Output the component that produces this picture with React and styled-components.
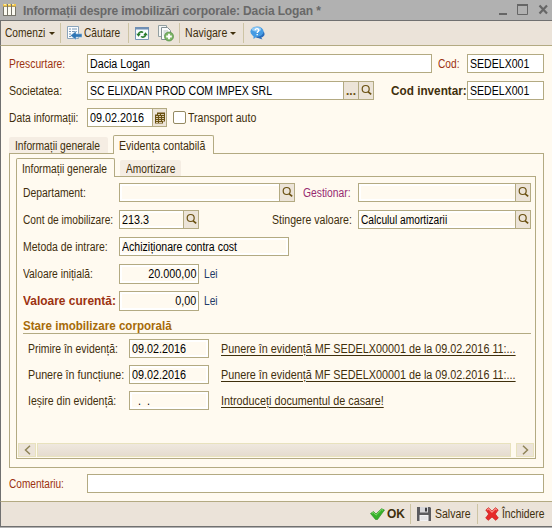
import React, { useState } from "react";
import styled, { createGlobalStyle } from "styled-components";

const line = "#b3aa82";

const GlobalStyle = createGlobalStyle`
  * {
    box-sizing: border-box;
  }

  body {
    margin: 0;
    font-family: "Liberation Sans", Arial, sans-serif;
    font-size: 12px;
    color: #3f2f0c;
  }

  input, button {
    font: inherit;
    color: inherit;
  }
`;

function SearchIcon() {
  return (
    <svg width="13" height="13" viewBox="0 0 13 13" fill="none" stroke="#6b5112">
      <circle cx="5.7" cy="5" r="3.5" strokeWidth="1.2" />
      <path d="M8.2 7.8L11.2 10.3" strokeWidth="1.7" />
    </svg>
  );
}

function CalendarIcon() {
  return (
    <svg width="12" height="12" viewBox="0 0 12 12">
      <path d="M3 0.500H11V9.500H9V11.500H1V2.500H3Z" fill="#6b5112" />
      <path d="M2 4.500H4M5 4.500H7M8 4.500H10M2 6.500H4M5 6.500H7M8 6.500H10M2 8.500H4M5 8.500H7M8 8.500H10M4 2.500H6M7 2.500H10M2 10.500H4M5 10.500H8" stroke="#e4d9c0" strokeWidth="0.9" />
    </svg>
  );
}

function JournalIcon() {
  return (
    <svg width="13" height="12" viewBox="0 0 13 12">
      <path d="M0 0H13V12H0Z" fill="#77756b" />
      <path d="M1 3H4V11H1ZM5 3H8V11H5ZM9 3H12V11H9Z" fill="#fbfaf2" />
      <path d="M0 0H4V2.500H0ZM5 0H8V2.500H5ZM9 0H13V2.500H9Z" fill="#efc44e" />
      <path d="M1 0H3V1H1ZM5 0H7V1H5ZM9 0H11V1H9Z" fill="#fff0a0" />
    </svg>
  );
}

function FindIcon() {
  return (
    <svg width="17" height="16" viewBox="0 0 17 16">
      <path d="M1.500 1.500H12.500V13.500H1.500Z" fill="#fbfdff" stroke="#8ba4bb" />
      <path d="M3 4H5M6 4H11M3 6.500H5M6 6.500H11M3 9H5M3 11.500H5" stroke="#7796b4" />
      <path d="M16 8.800V12.200H10V15L4.500 10.500L10 6V8.800Z" fill="#2f76b5" stroke="#d8e8f5" strokeWidth="0.5" />
    </svg>
  );
}

function RefreshIcon() {
  return (
    <svg width="14" height="13" viewBox="0 0 14 13">
      <path d="M0.500 0.500H13.500V12.500H0.500Z" fill="#f8fbff" stroke="#7895b4" />
      <path d="M0 0H14V2.500H0Z" fill="#6f8fb4" />
      <path d="M3.500 7C4 4.800 6.500 4.300 8 5.500M10.500 8C10 10.200 7.500 10.700 6 9.500" fill="none" stroke="#267a2b" strokeWidth="1.6" />
      <path d="M1.200 6.700H5.800L3.500 9.700ZM8.200 8.300H12.800L10.500 5.300Z" fill="#267a2b" />
    </svg>
  );
}

function CopyIcon() {
  return (
    <svg width="16" height="17" viewBox="0 0 16 17">
      <path d="M0.500 0.500H8.500V11.500H0.500Z" fill="#f4f6f5" stroke="#939fa1" />
      <path d="M3.500 2.500H9.500L12.500 5.500V14.500H3.500Z" fill="#fbfcfc" stroke="#839094" />
      <path d="M5.500 6H10M5.500 8H10M5.500 10H8" stroke="#b7c0c4" />
      <circle cx="11" cy="11.500" r="4.500" fill="#7db566" stroke="#4f8b42" strokeWidth="0.7" />
      <path d="M11 8.700V14.300M8.200 11.500H13.800" stroke="#fff" strokeWidth="1.800" />
    </svg>
  );
}

function HelpIcon() {
  return (
    <svg width="15" height="15" viewBox="0 0 15 15">
      <ellipse cx="9" cy="8" rx="5.600" ry="4" fill="#2a6cba" />
      <path d="M10 10L12.500 13.500L6.500 11.500Z" fill="#2a6cba" />
      <ellipse cx="7" cy="5.600" rx="6.600" ry="5.100" fill="#459be3" />
      <path d="M3.500 9L3.500 13L7.500 10Z" fill="#459be3" />
      <ellipse cx="6.500" cy="3.300" rx="4.600" ry="2.200" fill="#8dc8f5" />
      <path d="M5.200 4.300C5.200 2 9.200 2.200 8.700 4.500C8.500 5.500 7.200 5.700 7.200 7M7.200 8V9.300" fill="none" stroke="#fff" strokeWidth="1.400" />
    </svg>
  );
}

function CheckIcon() {
  return (
    <svg width="15" height="12" viewBox="0 0 15 12">
      <path d="M0.500 5.500L3.500 3.500L6 6L11.500 0.700L14.500 2L7.500 11.500H5.500Z" fill="#36b02a" stroke="#23891d" strokeWidth="0.6" />
      <path d="M1.800 5.400L3.400 4.400L6 7.200L11.600 1.700L13 2.200" fill="none" stroke="#8be375" strokeWidth="0.9" />
    </svg>
  );
}

function SaveIcon() {
  return (
    <svg width="14" height="14" viewBox="0 0 14 14">
      <path d="M0 0H13L14 1V14H0Z" fill="#5b5b5f" />
      <path d="M3 0H11V5.500H3Z" fill="#d6d6da" />
      <path d="M8 0.800H10V4.500H8Z" fill="#3c3c40" />
      <path d="M2.500 8H11.500V14H2.500Z" fill="#f2f2f4" />
      <path d="M3.500 10H10.500M3.500 12H10.500" stroke="#d4d4d8" />
    </svg>
  );
}

function CrossIcon() {
  return (
    <svg width="14" height="14" viewBox="0 0 14 14">
      <path d="M0.800 3L3.500 0.700L7 4L10.500 0.700L13.200 3L10.300 7L13.300 11L10.700 13.300L7 10L3.300 13.300L0.700 11L3.700 7Z" fill="#e62a2a" stroke="#c81a1a" strokeWidth="0.7" />
      <path d="M2 3L3.600 1.800L7 5.200L10.400 1.800L12 3" fill="none" stroke="#f98c84" strokeWidth="1.100" />
    </svg>
  );
}

function Caption({ width, indent, s, children, ...rest }) {
  return (
    <Label $w={width} $pl={indent} {...rest}>
      <Text $s={s}>{children}</Text>
    </Label>
  );
}

function InputField({ width, height, value, s, right, children, ...rest }) {
  return (
    <Field $w={width} $h={height} {...rest}>
      <Value $right={right}><Text $s={s} $right={right}>{value}</Text></Value>
      {children}
    </Field>
  );
}

function LookupField({ more, ...rest }) {
  return (
    <InputField {...rest}>
      {more && <FieldButton>...</FieldButton>}
      <FieldButton><SearchIcon /></FieldButton>
    </InputField>
  );
}

const documents = [
  { label: "Primire în evidență:", s: 0.87, date: "09.02.2016", link: "Punere în evidență MF SEDELX00001 de la 09.02.2016 11:..." },
  { label: "Punere în funcțiune:", s: 0.895, date: "09.02.2016", link: "Punere în evidență MF SEDELX00001 de la 09.02.2016 11:..." },
  { label: "Ieșire din evidență:", s: 0.875, date: "\u00a0\u00a0.\u00a0\u00a0.", link: "Introduceți documentul de casare!" },
];

function App() {
  const [transport, setTransport] = useState(false);

  return (
    <Window>
      <GlobalStyle />
      <TitleBar>
        <JournalIcon />
        <Title>Informații despre imobilizări corporale: Dacia Logan *</Title>
        <svg width="50" height="12" viewBox="0 0 50 12" fill="none" stroke="#666">
          <path d="M0 10H8" strokeWidth="2" />
          <path d="M18.500 1V10.500H28.500V1" />
          <path d="M18 1H29" strokeWidth="2" />
          <path d="M40.500 1.500L48 9.500M48 1.500L40.500 9.500" strokeWidth="2.200" />
        </svg>
      </TitleBar>

      <Toolbar>
        <Tool $w={60} $pl={4}><Text $s={0.85}>Comenzi</Text><Caret /></Tool>
        <Tool $w={68} $pl={5}><FindIcon /><Text $s={0.85}>Căutare</Text></Tool>
        <Tool $w={51} $pl={6} $gap={9}><RefreshIcon /><CopyIcon /></Tool>
        <Tool $w={64} $pl={5}><Text $s={0.88}>Navigare</Text><Caret /></Tool>
        <Tool $w={30} $pl={6} $last><HelpIcon /></Tool>
      </Toolbar>

      <Content>
        <Row>
          <Caption width={78} s={0.86} $red>Prescurtare:</Caption>
          <InputField width={345} value="Dacia Logan" s={0.89} />
          <Caption width={35} indent={6} s={0.85} $red>Cod:</Caption>
          <InputField width={77} value="SEDELX001" s={0.88} />
        </Row>
        <Row>
          <Caption width={78} s={0.885}>Societatea:</Caption>
          <LookupField width={287} more value="SC ELIXDAN PROD COM IMPEX SRL" s={0.875} />
          <Caption width={93} indent={17} s={0.98} $bold>Cod inventar:</Caption>
          <InputField width={77} value="SEDELX001" s={0.88} />
        </Row>
        <Row>
          <Caption width={78} s={0.86}>Data informații:</Caption>
          <InputField width={80} value="09.02.2016" s={0.9}>
            <FieldButton><CalendarIcon /></FieldButton>
          </InputField>
          <Check>
            <input type="checkbox" checked={transport} onChange={() => setTransport(!transport)} />
            <Text $s={0.88}>Transport auto</Text>
          </Check>
        </Row>

        <Tabs>
          <Tab $w={99}><Text $s={0.855}>Informații generale</Text></Tab>
          <Tab $w={101} $active><Text $s={0.88}>Evidența contabilă</Text></Tab>
        </Tabs>
        <OuterPanel>
          <Tabs>
            <Tab $w={99} $active><Text $s={0.855}>Informații generale</Text></Tab>
            <Tab $w={61}><Text $s={0.85}>Amortizare</Text></Tab>
          </Tabs>
          <InnerPanel>
            <Row>
              <Caption width={96} s={0.865}>Departament:</Caption>
              <LookupField width={176} $cream />
              <Caption width={63} indent={8} s={0.86} $purple>Gestionar:</Caption>
              <LookupField width={173} $cream />
            </Row>
            <Row>
              <Caption width={96} s={0.85}>Cont de imobilizare:</Caption>
              <LookupField width={80} value="213.3" s={0.9} $cream />
              <Caption width={159} indent={73} s={0.88}>Stingere valoare:</Caption>
              <LookupField width={173} value="Calculul amortizarii" s={0.85} $cream />
            </Row>
            <Row>
              <Caption width={96} s={0.87}>Metoda de intrare:</Caption>
              <InputField width={170} value="Achiziționare contra cost" s={0.88} $cream />
            </Row>
            <Row>
              <Caption width={96} s={0.86}>Valoare inițială:</Caption>
              <InputField width={80} height={20} value="20.000,00" s={0.9} right $cream />
              <Unit><Text $s={0.85}>Lei</Text></Unit>
            </Row>
            <Row>
              <Caption width={96} s={0.995} $bold $red>Valoare curentă:</Caption>
              <InputField width={80} height={20} value="0,00" s={0.9} right $cream />
              <Unit><Text $s={0.85}>Lei</Text></Unit>
            </Row>
            <SectionTitle><Text $s={0.965}>Stare imobilizare corporală</Text></SectionTitle>
            {documents.map((doc) => (
              <DocumentRow key={doc.label}>
                <Caption width={101} s={doc.s}>{doc.label}</Caption>
                <InputField width={80} value={doc.date} s={0.9} $cream />
                <Link><Text $s={0.9}>{doc.link}</Text></Link>
              </DocumentRow>
            ))}
            <ScrollBar>
              <ScrollArrow>
                <svg width="7" height="10" viewBox="0 0 7 10"><path d="M6 0.700L1.500 5L6 9.300" fill="none" stroke="#8f8458" strokeWidth="1.500" /></svg>
              </ScrollArrow>
              <ScrollThumb />
              <ScrollArrow>
                <svg width="7" height="10" viewBox="0 0 7 10"><path d="M1 0.700L5.500 5L1 9.300" fill="none" stroke="#8f8458" strokeWidth="1.500" /></svg>
              </ScrollArrow>
            </ScrollBar>
          </InnerPanel>
        </OuterPanel>

        <CommentRow>
          <Caption width={78} s={0.84} $red>Comentariu:</Caption>
          <InputField width={457} />
        </CommentRow>
      </Content>

      <Footer>
        <Tool $w={48} $pl={7} $gap={2}><CheckIcon /><b>OK</b></Tool>
        <Tool $w={67} $pl={6} $gap={4}><SaveIcon /><Text $s={0.875}>Salvare</Text></Tool>
        <Tool $w={74} $pl={7} $gap={3} $last><CrossIcon /><Text $s={0.86}>Închidere</Text></Tool>
      </Footer>
    </Window>
  );
}

export default App;

const Window = styled.div`
  display: flex;
  flex-direction: column;
  width: 552px;
  height: 528px;
  background: #fffaf0;
  overflow: hidden;
  white-space: nowrap;
  border-bottom: 1px solid #b1b1b1;
`;

const TitleBar = styled.header`
  display: flex;
  align-items: center;
  height: 21px;
  flex: none;
  padding: 0 3px 0 3px;
  background: #b1b1b1;
  border-bottom: 1px solid #707070;
`;

const Title = styled.h1`
  flex: 1;
  margin: 1px 0 0 7px;
  font-size: 12px;
  line-height: 16px;
  letter-spacing: -0.13px;
  color: #686868;
`;

const Toolbar = styled.nav`
  display: flex;
  align-items: center;
  height: 25px;
  flex: none;
  background: #ebe3d9;
  border-left: 1px solid #707070;
  border-bottom: 1px solid ${line};
`;

const Tool = styled.button`
  display: flex;
  align-items: center;
  flex: none;
  gap: ${(p) => p.$gap ?? 1}px;
  width: ${(p) => p.$w}px;
  height: 20px;
  padding: 0 0 0 ${(p) => p.$pl}px;
  border: 0;
  border-right: ${(p) => (p.$last ? 0 : 1)}px solid #cdc4a4;
  background: none;
`;

const Caret = styled.i`
  margin-left: -4px;
  border: 3px solid transparent;
  border-top-color: #3f2f0c;
  border-bottom: 0;
`;

/* narrows the glyphs, the full height stays */
const Text = styled.span`
  display: inline-block;
  transform: scaleX(${(p) => p.$s ?? 1});
  transform-origin: ${(p) => (p.$right ? "right" : "left")};
`;

const Content = styled.main`
  flex: 1;
  padding: 8px 8px 0;
  border-left: 1px solid #707070;
`;

const Row = styled.div`
  display: flex;
  height: 27px;
`;

const Label = styled.span`
  flex: none;
  width: ${(p) => p.$w}px;
  padding-left: ${(p) => p.$pl ?? 0}px;
  line-height: 20px;
  font-weight: ${(p) => (p.$bold ? "bold" : "normal")};
  color: ${(p) => (p.$red ? "#9c3210" : p.$purple ? "#962a70" : "#3f2f0c")};
`;

const Field = styled.div`
  display: flex;
  flex: none;
  width: ${(p) => p.$w}px;
  height: ${(p) => p.$h ?? 19}px;
  background: ${(p) => (p.$cream ? "#fffaf0" : "#fff")};
  border: 1px solid ${line};
  box-shadow: inset 0 0 0 2px #fff;
`;

const Value = styled.span`
  flex: 1;
  padding: 0 2px;
  line-height: 18px;
  text-align: ${(p) => (p.$right ? "right" : "left")};
  color: #000;
`;

const FieldButton = styled.button`
  display: flex;
  align-items: center;
  justify-content: center;
  width: 15px;
  padding: 0;
  border: 0;
  border-left: 1px solid ${line};
  background: #ece4d8;
  color: #6b5112;
  font-weight: bold;
`;

const Check = styled.label`
  display: flex;
  align-items: center;
  gap: 2px;
  height: 19px;
  margin-left: 6px;

  input {
    appearance: none;
    width: 13px;
    height: 13px;
    margin: 0;
    border: 1px solid #948a62;
    border-radius: 2px;
    background: #fff;
  }
`;

const Tabs = styled.div`
  display: flex;
  align-items: flex-end;
  gap: 5px;
  height: 19px;
  margin-bottom: -1px;
`;

const Tab = styled.div`
  position: relative;
  width: ${(p) => p.$w}px;
  height: ${(p) => (p.$active ? 19 : 17)}px;
  padding-left: ${(p) => (p.$active ? 5 : 6)}px;
  line-height: ${(p) => (p.$active ? 20 : 18)}px;
  border: ${(p) => (p.$active ? `1px solid ${line}` : 0)};
  border-bottom: ${(p) => (p.$active ? 0 : `1px solid ${line}`)};
  border-radius: 2px 2px 0 0;
  background: ${(p) => (p.$active ? "#fffaf0" : "#f5ede3")};
`;

const OuterPanel = styled.section`
  height: 315px;
  padding: 4px 7px 0 6px;
  border: 1px solid ${line};
`;

const InnerPanel = styled.section`
  display: flex;
  flex-direction: column;
  height: 283px;
  padding: 6px 1px 1px 6px;
  border: 1px solid ${line};
`;

const Unit = styled.span`
  margin-left: 5px;
  line-height: 20px;
  color: #1f3a66;
`;

const SectionTitle = styled.h2`
  width: 508px;
  height: 16px;
  margin: 0 0 5px;
  font-size: 12px;
  line-height: 16px;
  color: #a66a08;
  border-bottom: 1px solid ${line};
`;

const DocumentRow = styled.div`
  display: flex;
  height: 26px;
  padding-left: 5px;
`;

const Link = styled.a`
  margin-left: 12px;
  line-height: 20px;

  ${Text} {
    text-decoration: underline;
    text-underline-offset: 2px;
  }
`;

const ScrollBar = styled.div`
  display: flex;
  gap: 1px;
  height: 14px;
  margin: auto 0 0 -5px;
`;

const ScrollArrow = styled.button`
  display: flex;
  align-items: center;
  justify-content: center;
  width: 18px;
  padding: 0;
  border: 1px solid #e8e2bd;
  background: #ece4d9;
`;

const ScrollThumb = styled.div`
  width: 474px;
  margin-right: 4px;
  border: 1px solid #e8e2bd;
  background: linear-gradient(#efe8df, #e5dccf);
`;

const CommentRow = styled(Row)`
  margin-top: 6px;
`;

const Footer = styled.footer`
  display: flex;
  align-items: center;
  justify-content: flex-end;
  height: 26px;
  flex: none;
  background: #ebe3d9;
  border-left: 1px solid #707070;
  border-top: 1px solid ${line};
  border-bottom: 1px solid #707070;
`;
